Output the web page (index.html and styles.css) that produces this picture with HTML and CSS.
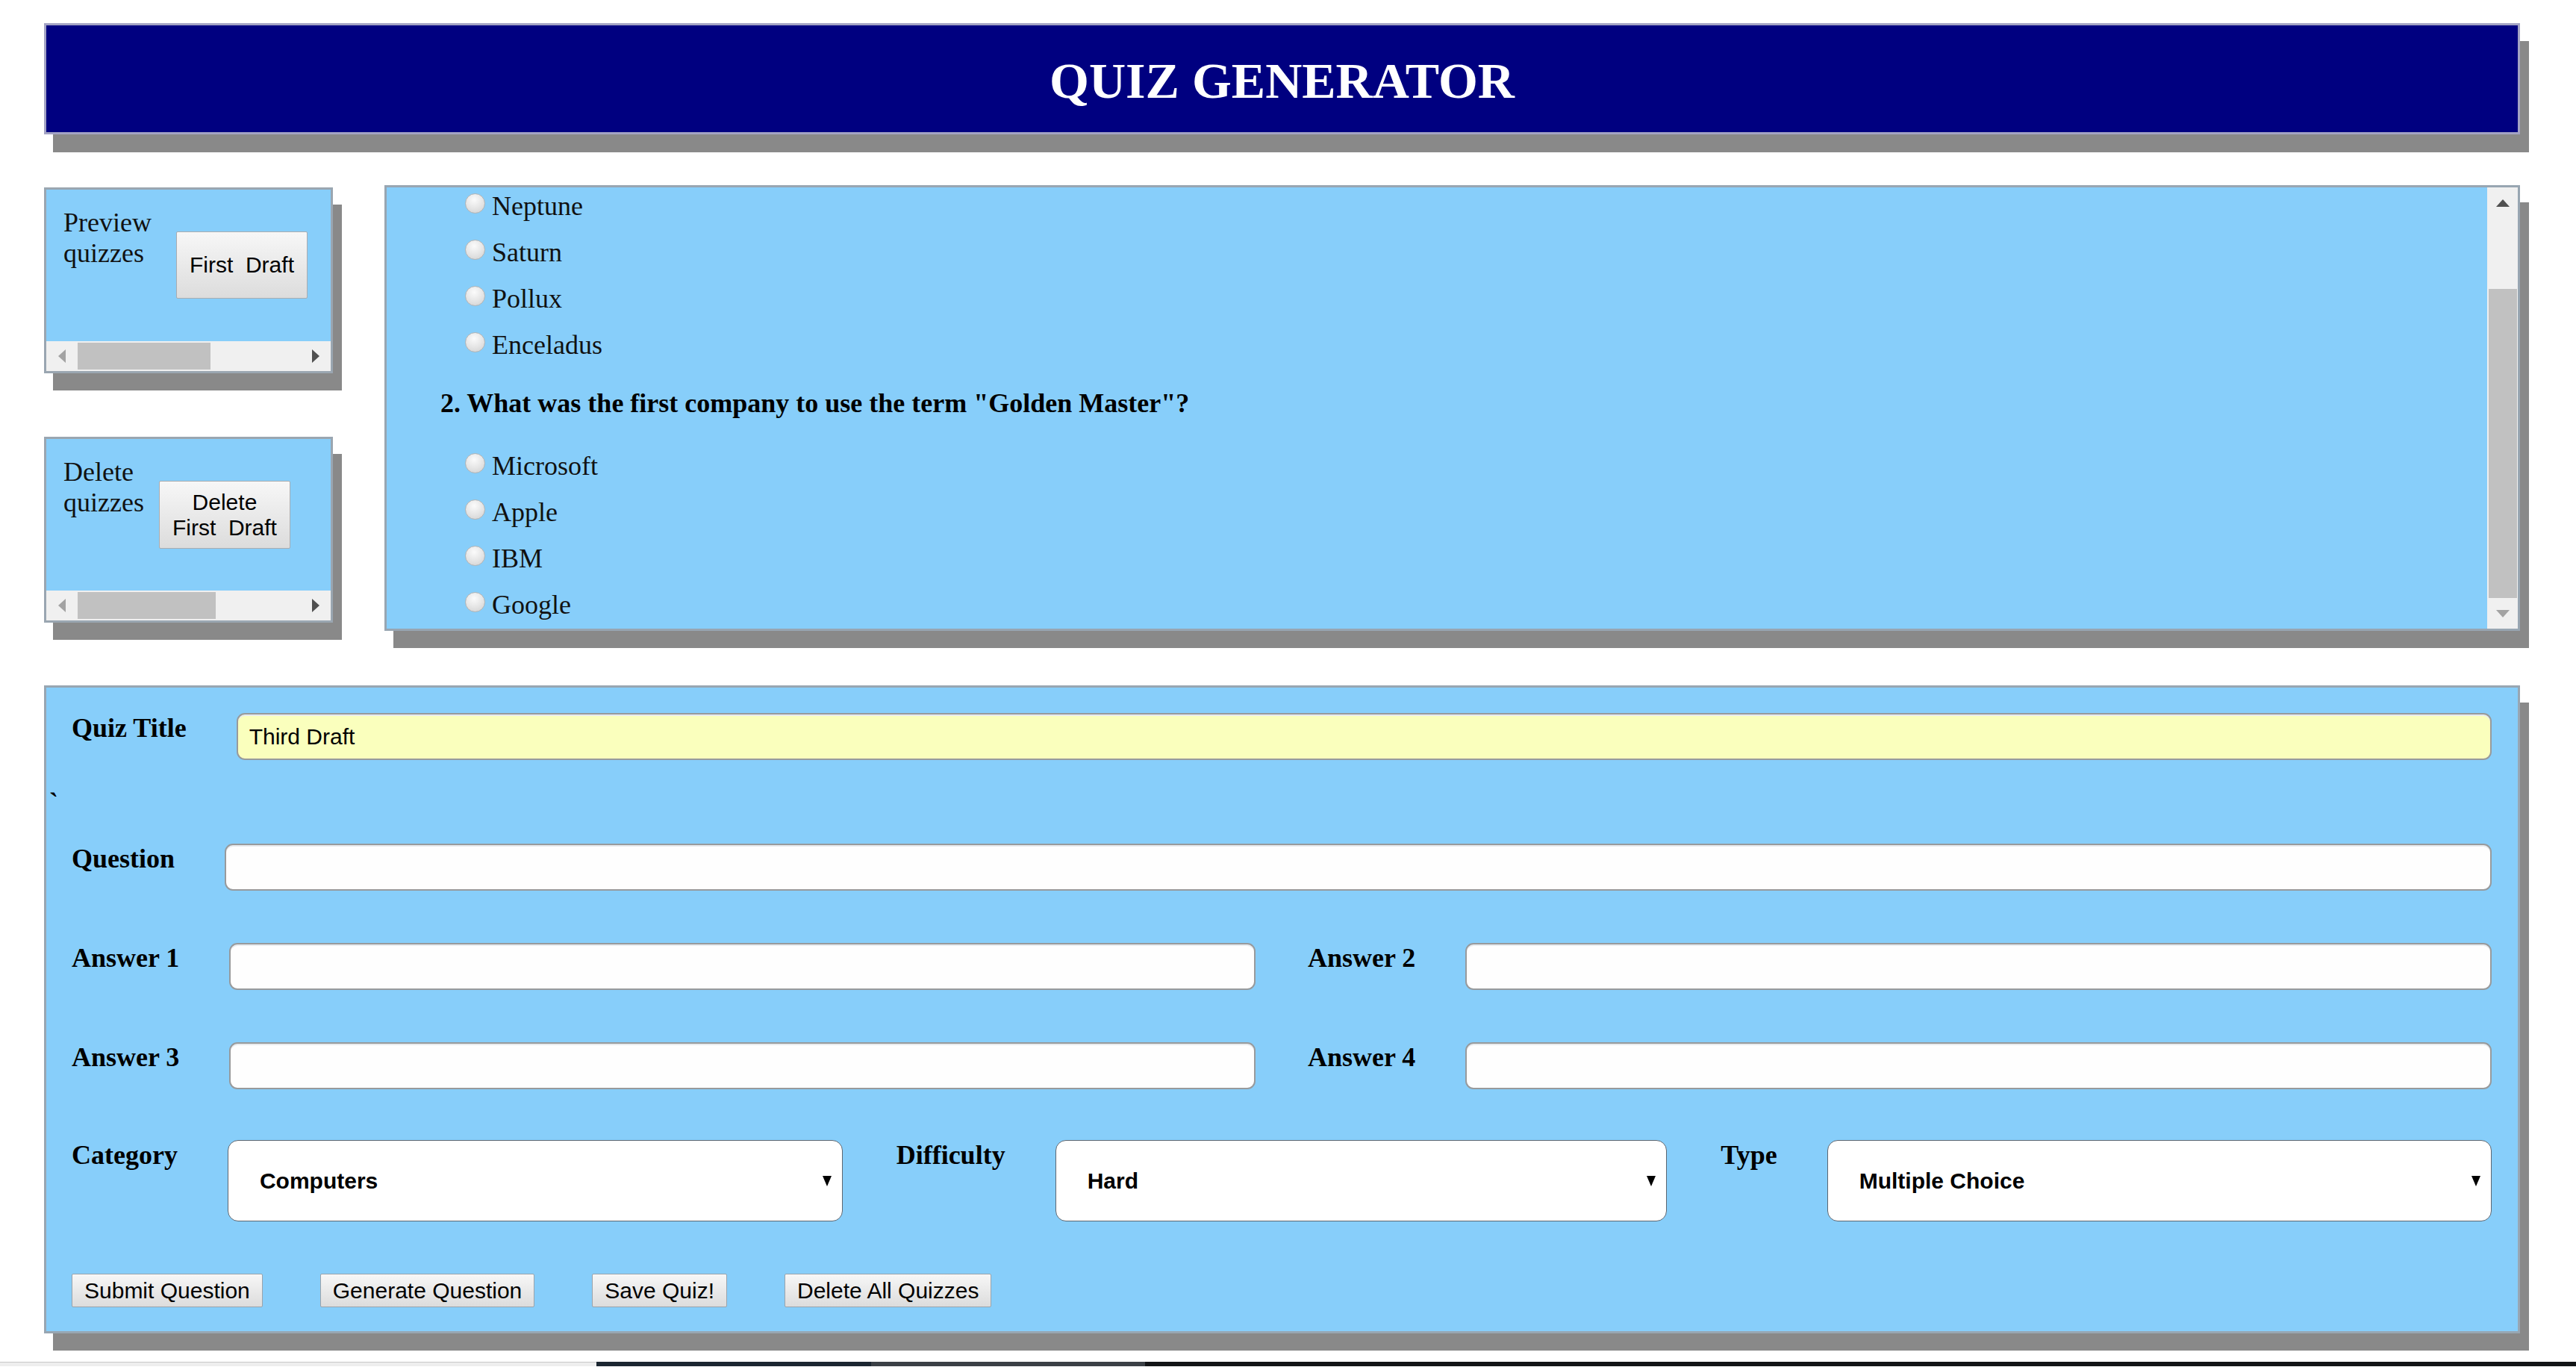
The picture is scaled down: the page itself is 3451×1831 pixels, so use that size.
FILE: index.html
```html
<!DOCTYPE html>
<html lang="en">
<head>
<meta charset="utf-8">
<title>Quiz Generator</title>
<link rel="stylesheet" href="styles.css">
</head>
<body>
<div class="page">
  <header class="banner"><h1>QUIZ GENERATOR</h1></header>

  <div class="top-row">
    <aside class="side">
      <section class="mini mini-preview">
        <div class="mini-body">
          <span class="mini-label">Preview quizzes</span>
          <button class="btn mini-btn" type="button">First&nbsp; Draft</button>
        </div>
        <div class="hscroll">
          <span class="sb-btn"><span class="arr arr-left"></span></span>
          <span class="sb-track"><span class="sb-thumb" style="width:178px"></span></span>
          <span class="sb-btn"><span class="arr arr-right"></span></span>
        </div>
      </section>

      <section class="mini mini-delete">
        <div class="mini-body">
          <span class="mini-label">Delete quizzes</span>
          <button class="btn mini-btn" type="button">Delete<br>First&nbsp; Draft</button>
        </div>
        <div class="hscroll">
          <span class="sb-btn"><span class="arr arr-left"></span></span>
          <span class="sb-track"><span class="sb-thumb" style="width:185px"></span></span>
          <span class="sb-btn"><span class="arr arr-right"></span></span>
        </div>
      </section>
    </aside>

    <section class="preview">
      <div class="preview-view">
        <div class="opt"><span class="radio"></span>Neptune</div>
        <div class="opt"><span class="radio"></span>Saturn</div>
        <div class="opt"><span class="radio"></span>Pollux</div>
        <div class="opt"><span class="radio"></span>Enceladus</div>
        <div class="q">2. What was the first company to use the term "Golden Master"?</div>
        <div class="opt"><span class="radio"></span>Microsoft</div>
        <div class="opt"><span class="radio"></span>Apple</div>
        <div class="opt"><span class="radio"></span>IBM</div>
        <div class="opt"><span class="radio"></span>Google</div>
      </div>
      <div class="vscroll">
        <span class="vs-btn"><span class="arr arr-up"></span></span>
        <span class="vs-track"><span class="vs-thumb" style="height:414px"></span></span>
        <span class="vs-btn"><span class="arr arr-down"></span></span>
      </div>
    </section>
  </div>

  <form class="editor">
    <div class="row row-title">
      <label class="lbl">Quiz Title</label>
      <input class="field field-auto" type="text" value="Third Draft">
    </div>
    <div class="bt">`</div>
    <div class="row">
      <label class="lbl">Question</label>
      <input class="field" type="text">
    </div>
    <div class="grid2">
      <div class="cell"><label class="lbl">Answer 1</label><input class="field" type="text"></div>
      <div class="cell"><label class="lbl">Answer 2</label><input class="field" type="text"></div>
    </div>
    <div class="grid2 grid2-last">
      <div class="cell"><label class="lbl">Answer 3</label><input class="field" type="text"></div>
      <div class="cell"><label class="lbl">Answer 4</label><input class="field" type="text"></div>
    </div>
    <div class="grid3">
      <div class="cell"><label class="lbl">Category</label>
        <div class="sel"><select><option>Computers</option></select></div></div>
      <div class="cell"><label class="lbl">Difficulty</label>
        <div class="sel"><select><option>Hard</option></select></div></div>
      <div class="cell"><label class="lbl">Type</label>
        <div class="sel"><select><option>Multiple Choice</option></select></div></div>
    </div>
    <div class="actions">
      <button class="btn act" type="button">Submit Question</button>
      <button class="btn act" type="button">Generate Question</button>
      <button class="btn act" type="button">Save Quiz!</button>
      <button class="btn act" type="button">Delete All Quizzes</button>
    </div>
  </form>
</div>

<div class="taskbar">
  <span class="tb tb-light"></span>
  <span class="tb tb-navy"></span>
  <span class="tb tb-gray"></span>
  <span class="tb tb-dark"></span>
</div>
</body>
</html>
```

FILE: styles.css
```css
html { overflow: hidden; }
body {
  margin: 0;
  background: #ffffff;
  font-family: "Liberation Serif", "Times New Roman", serif;
  color: #000;
}
.page { padding: 31px 75px 0 59px; }

/* header */
.banner {
  height: 149px;
  box-sizing: border-box;
  background: #000080;
  border: 3px solid #a3a3c4;
  box-shadow: 12px 24px 0 #898989;
  display: flex;
  justify-content: center;
  align-items: center;
  padding-top: 5px;
}
.banner h1 {
  margin: 0;
  font-size: 68px;
  line-height: 78px;
  font-weight: bold;
  color: #fff;
}

/* top row */
.top-row {
  display: flex;
  align-items: flex-start;
  gap: 69px;
  margin-top: 68px;
}
.side {
  width: 387px;
  flex: none;
  padding-top: 3px;
  display: flex;
  flex-direction: column;
  gap: 85px;
}
.mini {
  background: #87cefa;
  border: 3px solid #9aa6b1;
  box-shadow: 12px 23px 0 #898989;
}
.mini-body {
  height: 203px;
  box-sizing: border-box;
  padding: 24px 0 0 23px;
  display: flex;
  align-items: flex-start;
}
.mini-label {
  width: min-content;
  font-size: 36px;
  line-height: 41px;
  color: #111;
}
.btn {
  font-family: "Liberation Sans", Arial, sans-serif;
  font-size: 30px;
  color: #000;
  background: linear-gradient(#f7f7f7, #dcdcdc);
  border: 1px solid #a9acb0;
  border-radius: 2px;
  padding: 0;
  line-height: normal;
}
.mini-btn {
  flex: none;
  width: 176px;
  height: 90px;
  margin-top: 32px;
}
.mini-preview .mini-btn { margin-left: 33px; }
.mini-delete .mini-btn { margin-left: 20px; height: 91px; }

/* scrollbars */
.hscroll {
  height: 40px;
  display: flex;
  background: #f0f0f0;
}
.sb-btn {
  width: 41px;
  flex: none;
  display: flex;
  align-items: center;
  justify-content: center;
}
.sb-track {
  flex: 1;
  display: flex;
  box-sizing: border-box;
  padding: 2px 0 2px 1px;
}
.sb-thumb { background: #c1c1c1; height: 100%; }
.arr { width: 0; height: 0; display: block; }
.arr-left {
  border-top: 9px solid transparent;
  border-bottom: 9px solid transparent;
  border-right: 10px solid #a3a3a3;
}
.arr-right {
  border-top: 9px solid transparent;
  border-bottom: 9px solid transparent;
  border-left: 10px solid #505050;
}
.arr-up {
  border-left: 9.5px solid transparent;
  border-right: 9.5px solid transparent;
  border-bottom: 10px solid #505050;
}
.arr-down {
  border-left: 9.5px solid transparent;
  border-right: 9.5px solid transparent;
  border-top: 10px solid #a3a3a3;
}

/* quiz preview */
.preview {
  flex: 1;
  height: 597px;
  box-sizing: border-box;
  border: 3px solid #98a6b2;
  background: #87cefa;
  box-shadow: 12px 23px 0 #898989;
  display: flex;
}
.preview-view {
  flex: 1;
  overflow: hidden;
  padding: 5px 0 0 72px;
}
.opt {
  font-size: 36px;
  line-height: 41px;
  margin: 0 0 21px 33px;
  white-space: nowrap;
  color: #111;
}
.radio {
  display: inline-block;
  width: 27px;
  height: 27px;
  box-sizing: border-box;
  border-radius: 50%;
  border: 1px solid #b3b3b3;
  background: radial-gradient(circle at 45% 30%, #fbfbfb 0%, #e4e4e4 55%, #cfcfcf 100%);
  vertical-align: 2px;
  margin-right: 9px;
}
.q {
  font-size: 36px;
  line-height: 41px;
  font-weight: bold;
  margin: 37px 0 43px;
  white-space: nowrap;
}
.vscroll {
  width: 41px;
  flex: none;
  display: flex;
  flex-direction: column;
  background: #f0f0f0;
}
.vs-btn {
  height: 41px;
  flex: none;
  display: flex;
  align-items: center;
  justify-content: center;
}
.vs-track {
  flex: 1;
  display: flex;
  flex-direction: column;
  justify-content: flex-end;
  padding: 0 1px 0 2px;
}
.vs-thumb { background: #c1c1c1; width: 100%; }

/* editor form */
.editor {
  margin: 73px 0 0;
  border: 3px solid #98a6b2;
  background: #87cefa;
  box-shadow: 12px 23px 0 #898989;
  padding: 34px 35px 32px 34px;
}
.row {
  display: flex;
  align-items: flex-start;
  margin-bottom: 70px;
}
.row-title { margin-bottom: 0; }
.bt {
  font-weight: bold;
  font-size: 36px;
  line-height: 41px;
  margin: 37px 0 34px -30px;
}
.lbl {
  flex: none;
  font-weight: bold;
  font-size: 36px;
  line-height: 41px;
  margin-right: 67px;
  white-space: nowrap;
}
.field {
  flex: 1;
  min-width: 0;
  height: 63px;
  box-sizing: border-box;
  border: 2px solid #989a9c;
  border-radius: 11px;
  background: #fefefe;
  box-shadow: inset 0 2px 0 #e8ebee;
  padding: 0 15px;
  font-family: "Liberation Sans", Arial, sans-serif;
  font-size: 30px;
  color: #000;
  outline: none;
}
.field-auto { background: #faffbd; }
.grid2 {
  display: grid;
  grid-template-columns: 1fr 1fr;
  column-gap: 70px;
  margin-bottom: 70px;
}
.grid2-last { margin-bottom: 68px; }
.grid3 {
  display: grid;
  grid-template-columns: 1fr 1fr 1fr;
  column-gap: 72px;
  margin-bottom: 70px;
}
.cell {
  display: flex;
  align-items: flex-start;
  min-width: 0;
}
.sel {
  flex: 1;
  min-width: 0;
  position: relative;
}
.sel select {
  -webkit-appearance: none;
  appearance: none;
  width: 100%;
  height: 109px;
  box-sizing: border-box;
  border: 1px solid #5d6670;
  border-radius: 14px;
  background: #fff;
  padding: 0 0 0 42px;
  font-family: "Liberation Sans", Arial, sans-serif;
  font-weight: bold;
  font-size: 30px;
  color: #000;
  outline: none;
}
.sel::after {
  content: "";
  position: absolute;
  right: 15px;
  top: 50%;
  margin-top: -7px;
  border-left: 6px solid transparent;
  border-right: 6px solid transparent;
  border-top: 14px solid #000;
  pointer-events: none;
}
.actions {
  display: flex;
  gap: 77px;
}
.act {
  height: 45px;
  padding: 0 16px;
  border-color: #9aa3ab;
}

/* bottom strip */
.taskbar {
  display: flex;
  height: 6px;
  margin-top: 38px;
}
.tb { display: block; height: 100%; }
.tb-light { width: 799px; background: #eeeeee; border-top: 1px solid #c8c8c8; box-sizing: border-box; }
.tb-navy { width: 368px; background: #1b2631; }
.tb-gray { width: 367px; background: #3b4046; }
.tb-dark { flex: 1; background: #121416; }
```
